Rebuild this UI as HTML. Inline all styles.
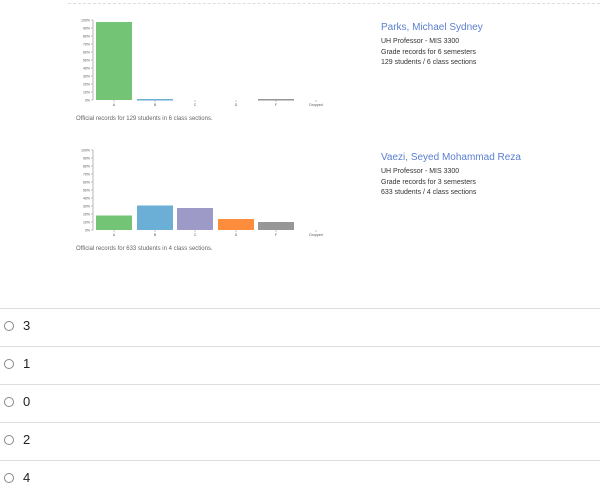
<!DOCTYPE html>
<html><head><meta charset="utf-8"><style>
body{margin:0;width:600px;height:500px;background:#fff;position:relative;overflow:hidden;font-family:"Liberation Sans",Arial,sans-serif}
.a{position:absolute}
.name{color:#5a7fcf;font-size:10px}
.info{font-size:7px;color:#333;line-height:10.5px}
.cap{font-size:6px;color:#666}
.hr{position:absolute;left:0;width:600px;height:1px;background:#ddd}
.rad{position:absolute;left:4px;width:10px;height:10px;border:1px solid #888;border-radius:50%;box-sizing:border-box}
.opt{position:absolute;left:23px;font-size:13px;color:#222}
</style></head><body>
<div class="a" style="left:68px;top:3px;width:532px;border-top:1px dashed #ddd"></div>

<svg class="a" style="left:0;top:0" width="340" height="260" font-family="Liberation Sans, sans-serif">
<g font-size="3.5" fill="#555" text-anchor="end">
<line x1="93" y1="20" x2="93" y2="100" stroke="#888" stroke-width="0.6"/>
<path d="M91 20h2M91 28h2M91 36h2M91 44h2M91 52h2M91 60h2M91 68h2M91 76h2M91 84h2M91 92h2M91 100h2" stroke="#888" stroke-width="0.5"/>
<text x="90" y="21.5">100%</text><text x="90" y="29.5">90%</text><text x="90" y="37.5">80%</text><text x="90" y="45.5">70%</text><text x="90" y="53.5">60%</text><text x="90" y="61.5">50%</text><text x="90" y="69.5">40%</text><text x="90" y="77.5">30%</text><text x="90" y="85.5">20%</text><text x="90" y="93.5">10%</text><text x="90" y="101.5">0%</text>
</g>
<rect x="96" y="22" width="36" height="78" fill="#74c476"/>
<rect x="137" y="99" width="36" height="1.5" fill="#6baed6"/>
<rect x="258" y="99" width="36" height="1.5" fill="#969696"/>
<path d="M114 100v2M155 100v2M195 100v2M236 100v2M276 100v2M316 100v2" stroke="#888" stroke-width="0.5"/>
<g font-size="3.5" fill="#555" text-anchor="middle">
<text x="114" y="106">A</text><text x="155" y="106">B</text><text x="195" y="106">C</text><text x="236" y="106">D</text><text x="276" y="106">F</text><text x="316" y="106">Dropped</text>
</g>

<g font-size="3.5" fill="#555" text-anchor="end">
<line x1="93" y1="150" x2="93" y2="230" stroke="#888" stroke-width="0.6"/>
<path d="M91 150h2M91 158h2M91 166h2M91 174h2M91 182h2M91 190h2M91 198h2M91 206h2M91 214h2M91 222h2M91 230h2" stroke="#888" stroke-width="0.5"/>
<text x="90" y="151.5">100%</text><text x="90" y="159.5">90%</text><text x="90" y="167.5">80%</text><text x="90" y="175.5">70%</text><text x="90" y="183.5">60%</text><text x="90" y="191.5">50%</text><text x="90" y="199.5">40%</text><text x="90" y="207.5">30%</text><text x="90" y="215.5">20%</text><text x="90" y="223.5">10%</text><text x="90" y="231.5">0%</text>
</g>
<rect x="96" y="215.5" width="36" height="14.5" fill="#74c476"/>
<rect x="137" y="205.5" width="36" height="24.5" fill="#6baed6"/>
<rect x="177" y="208" width="36" height="22" fill="#9e9ac8"/>
<rect x="218" y="219" width="36" height="11" fill="#fd8d3c"/>
<rect x="258" y="222" width="36" height="8" fill="#969696"/>
<path d="M114 230v2M155 230v2M195 230v2M236 230v2M276 230v2M316 230v2" stroke="#888" stroke-width="0.5"/>
<g font-size="3.5" fill="#555" text-anchor="middle">
<text x="114" y="236">A</text><text x="155" y="236">B</text><text x="195" y="236">C</text><text x="236" y="236">D</text><text x="276" y="236">F</text><text x="316" y="236">Dropped</text>
</g>
</svg>

<div class="a cap" style="left:76px;top:116px">Official records for 129 students in 6 class sections.</div>
<div class="a cap" style="left:76px;top:246px">Official records for 633 students in 4 class sections.</div>

<div class="a name" style="left:381px;top:22px">Parks, Michael Sydney</div>
<div class="a info" style="left:381px;top:37px">UH Professor - MIS 3300<br>Grade records for 6 semesters<br>129 students / 6 class sections</div>
<div class="a name" style="left:381px;top:152px">Vaezi, Seyed Mohammad Reza</div>
<div class="a info" style="left:381px;top:167px">UH Professor - MIS 3300<br>Grade records for 3 semesters<br>633 students / 4 class sections</div>

<div class="hr" style="top:308px"></div>
<div class="hr" style="top:346px"></div>
<div class="hr" style="top:384px"></div>
<div class="hr" style="top:422px"></div>
<div class="hr" style="top:460px"></div>

<div class="rad" style="top:321px"></div><div class="opt" style="top:318px">3</div>
<div class="rad" style="top:359px"></div><div class="opt" style="top:356px">1</div>
<div class="rad" style="top:397px"></div><div class="opt" style="top:394px">0</div>
<div class="rad" style="top:435px"></div><div class="opt" style="top:432px">2</div>
<div class="rad" style="top:473px"></div><div class="opt" style="top:470px">4</div>
</body></html>
